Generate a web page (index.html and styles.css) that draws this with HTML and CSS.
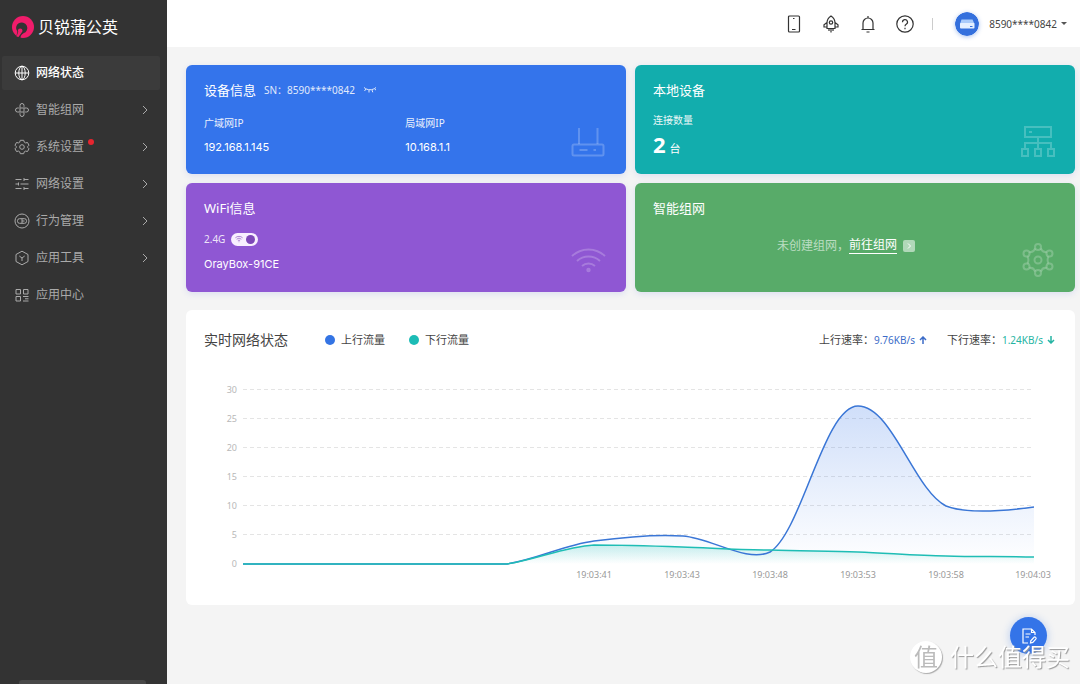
FILE: index.html
```html
<!DOCTYPE html>
<html lang="zh-CN">
<head>
<meta charset="utf-8">
<meta name="viewport" content="width=device-width, initial-scale=1">
<title>贝锐蒲公英</title>
<link rel="stylesheet" href="styles.css">
</head>
<body>
<div class="app">
  <aside class="sidebar">
    <div class="brand">
      <svg class="brand-logo" viewBox="0 0 22 22" aria-hidden="true"><circle cx="11" cy="11" r="11" fill="#f01c6b"/><path d="M5 22C4 18.500 5.500 17.500 5.300 15.500A5.600 5.600 0 1 1 11.500 17.300C9.500 18.500 8.500 20 8.500 22Z" fill="#333"/><circle cx="8.200" cy="14.800" r="2.300" fill="#f01c6b"/><path d="M4.500 20.500 6.300 15.800l3.200 1-3 4.200z" fill="#f01c6b"/></svg>
      <span class="brand-name">贝锐蒲公英</span>
    </div>
    <nav class="nav">
      <a class="nav-item active" href="#"><svg class="nav-icon" viewBox="0 0 16 16"><circle cx="8" cy="8" r="6.800"/><ellipse cx="8" cy="8" rx="3.200" ry="6.800"/><path d="M1.200 8h13.600M8 1.200v13.600"/></svg><span>网络状态</span></a>
      <a class="nav-item" href="#"><svg class="nav-icon" viewBox="0 0 16 16"><path d="M6 9.700V3.500a2 2 0 0 1 4 0V4.800M6.300 6h6.200a2 2 0 0 1 0 4H11.200M10 6.300v6.200a2 2 0 0 1-4 0V11.200M9.700 10H3.500a2 2 0 0 1 0-4H4.800"/></svg><span>智能组网</span><svg class="chevron" viewBox="0 0 6 10"><path d="M1 1l4 4-4 4"/></svg></a>
      <a class="nav-item" href="#"><svg class="nav-icon" viewBox="0 0 16 16"><path stroke-linejoin="round" d="M6.300 1.300h3.400l.6 1.900 1.200.7 2-.4 1.500 2.700L13.700 7.600v.8l1.300 1.400-1.500 2.700-2-.4-1.200.7-.6 1.900H6.300l-.6-1.900-1.200-.7-2 .4L1 9.800l1.300-1.400v-.8L1 6.200l1.500-2.700 2 .4 1.200-.7z"/><circle cx="8" cy="8" r="2.300"/></svg><span class="dotted">系统设置<i class="badge"></i></span><svg class="chevron" viewBox="0 0 6 10"><path d="M1 1l4 4-4 4"/></svg></a>
      <a class="nav-item" href="#"><svg class="nav-icon" viewBox="0 0 16 16"><path d="M1.500 3.500h6M10 3.500h4.500M10 2v3M1.500 8H4M6.500 8h8M4.500 6.500v3M1.500 12.500h6M10 12.500h4.500M10 11v3"/></svg><span>网络设置</span><svg class="chevron" viewBox="0 0 6 10"><path d="M1 1l4 4-4 4"/></svg></a>
      <a class="nav-item" href="#"><svg class="nav-icon" viewBox="0 0 16 16"><circle cx="8" cy="8" r="7"/><rect x="3.500" y="5.700" width="9" height="4.600" rx="2"/><path d="M8 5.700v4.600M8 8h2.500"/></svg><span>行为管理</span><svg class="chevron" viewBox="0 0 6 10"><path d="M1 1l4 4-4 4"/></svg></a>
      <a class="nav-item" href="#"><svg class="nav-icon" viewBox="0 0 16 16"><path d="M8 1.200l6 3.300v7l-6 3.300-6-3.300v-7zM5.300 6l2.700 2 2.700-2M8 8v3"/></svg><span>应用工具</span><svg class="chevron" viewBox="0 0 6 10"><path d="M1 1l4 4-4 4"/></svg></a>
      <a class="nav-item" href="#"><svg class="nav-icon" viewBox="0 0 16 16"><path d="M2 2.500h4.500V7H2zM9.500 2.500H14V7H9.500zM2 9.500h4.500V14H2zM9 9.500h5.500M11 11.800h3.500M9 14h5.500"/></svg><span>应用中心</span></a>
    </nav>
    <div class="sidebar-handle"></div>
  </aside>

  <div class="page">
    <header class="topbar">
      <button class="icon-btn" type="button" aria-label="手机"><svg viewBox="0 0 20 20"><rect x="4.500" y="2" width="11" height="16" rx="1"/><path d="M8 15.500h3.500M9 4.500h1.500"/></svg></button>
      <button class="icon-btn" type="button" aria-label="加速"><svg viewBox="0 0 20 20"><path d="M10 2C7 4 6 6.500 6 9v5.500h8V9c0-2.500-1-5-4-7zM6 8.500l-3 2.200V13h3M14 8.500l3 2.200V13h-3M8 14.500V17M10 14.500v4M12 14.500V17"/><circle cx="10" cy="8.500" r="1.700"/></svg></button>
      <button class="icon-btn" type="button" aria-label="通知"><svg viewBox="0 0 20 20"><path d="M3.500 15.500h13M5 15.500V9a5 5 0 0 1 10 0v6.500M10 2v2M8.500 18h3"/></svg></button>
      <button class="icon-btn" type="button" aria-label="帮助"><svg viewBox="0 0 20 20"><circle cx="10" cy="10" r="8.200"/><path d="M7.500 8.200a2.500 2.500 0 1 1 3.700 2.100c-.8.500-1.200.9-1.200 1.900M10 13.800v1.400"/></svg></button>
      <span class="divider"></span>
      <button class="account" type="button">
        <svg class="avatar" viewBox="0 0 24 24" aria-hidden="true"><circle cx="12" cy="12" r="12" fill="#3470dd"/><path d="M6.500 7.500h11l2 4.500H5z" fill="#a9cbfa"/><rect x="5" y="11" width="14.500" height="5.500" rx="1" fill="#e4f0ff"/><path d="M15 14.500h2.500" stroke="#3470dd"/></svg>
        <span>8590****0842</span>
        <i class="caret"></i>
      </button>
    </header>

    <main class="content">
      <section class="cards">
        <article class="card blue">
          <div class="card-body">
            <header class="card-head"><h2>设备信息</h2><span class="sn">SN：8590****0842</span>
              <svg class="eye" viewBox="0 0 14 8" aria-hidden="true"><path d="M1 1.500c3.500 3 8.500 3 12 0M3 3 1.500 5M6 4v2.500M9 4l.8 2.300M11.500 3l1.500 1"/></svg></header>
            <dl class="facts">
              <div><dt>广域网IP</dt><dd>192.168.1.145</dd></div>
              <div><dt>局域网IP</dt><dd>10.168.1.1</dd></div>
            </dl>
          </div>
          <svg class="card-icon" viewBox="0 0 36 36" aria-hidden="true"><rect x="2.500" y="19.500" width="31" height="11" rx="1.500"/><path d="M9 3v16M27.500 3v16M9.500 25h8M23.500 25h2.500"/></svg>
        </article>

        <article class="card teal">
          <div class="card-body">
            <header class="card-head"><h2>本地设备</h2></header>
            <p class="label">连接数量</p>
            <p class="count"><strong>2</strong><span>台</span></p>
          </div>
          <svg class="card-icon" viewBox="0 0 36 36" aria-hidden="true"><path d="M6 2h26v10H6zM10 7h3M19 12v12M6 24v-6h26v6M3 24h6v7H3zM16 24h6v7h-6zM29 24h6v7h-6z"/></svg>
        </article>

        <article class="card purple">
          <div class="card-body">
            <header class="card-head"><h2>WiFi信息</h2></header>
            <label class="band"><span>2.4G</span>
              <span class="switch"><input type="checkbox" checked><svg viewBox="0 0 12 10" aria-hidden="true"><path d="M1.500 3.500a6.500 6.500 0 0 1 9 0M3 5.300a4.300 4.300 0 0 1 6 0M4.600 7a2 2 0 0 1 2.800 0M6 8v1"/></svg></span>
            </label>
            <p class="value">OrayBox-91CE</p>
          </div>
          <svg class="card-icon" viewBox="0 0 36 36" aria-hidden="true"><path d="M2 13a24 24 0 0 1 33 0M7 18a17 17 0 0 1 23 0M12 23a10 10 0 0 1 13 0"/><circle cx="18.500" cy="27" r="1.200"/></svg>
        </article>

        <article class="card green">
          <div class="card-body">
            <header class="card-head"><h2>智能组网</h2></header>
            <p class="empty">未创建组网，<a href="#">前往组网</a><svg class="go" viewBox="0 0 12 12" aria-hidden="true"><rect width="12" height="12" rx="2"/><path d="M5 3.500 7.500 6 5 8.500"/></svg></p>
          </div>
          <svg class="card-icon" viewBox="0 0 36 36" aria-hidden="true"><circle cx="19" cy="17" r="3.500"/><circle cx="19" cy="4" r="3"/><circle cx="19" cy="30" r="3"/><circle cx="7.500" cy="10.500" r="3"/><circle cx="30.500" cy="10.500" r="3"/><circle cx="7.500" cy="23.500" r="3"/><circle cx="30.500" cy="23.500" r="3"/><path d="M16 5.500c-1 3-3 4-5.500 3.500M22 5.500c1 3 3 4 5.500 3.500M16 28.500c-1-3-3-4-5.500-3.500M22 28.500c1-3 3-4 5.500-3.500M8.500 13.500c1.300 2.500 1.300 4.500 0 7M29.500 13.500c-1.300 2.500-1.300 4.500 0 7"/></svg>
        </article>
      </section>

      <section class="panel">
        <header class="panel-head">
          <h2>实时网络状态</h2>
          <ul class="legend"><li class="up">上行流量</li><li class="down">下行流量</li></ul>
          <div class="rates">
            <span>上行速率：<b class="rate-up">9.76KB/s</b><svg class="arrow rate-up" viewBox="0 0 8 8"><path d="M4 8V1M1 4l3-3 3 3"/></svg></span>
            <span>下行速率：<b class="rate-down">1.24KB/s</b><svg class="arrow rate-down" viewBox="0 0 8 8"><path d="M4 0v7M1 4l3 3 3-3"/></svg></span>
          </div>
        </header>
        <svg class="chart" viewBox="0 0 851 206" role="img" aria-label="实时网络状态">
          <defs>
            <linearGradient id="fill-up" x1="0" y1="26" x2="0" y2="184" gradientUnits="userSpaceOnUse"><stop offset="0" stop-color="#3a78e8" stop-opacity=".24"/><stop offset="1" stop-color="#3a78e8" stop-opacity="0"/></linearGradient>
            <linearGradient id="fill-down" x1="0" y1="165" x2="0" y2="184" gradientUnits="userSpaceOnUse"><stop offset="0" stop-color="#1fc0b7" stop-opacity=".24"/><stop offset="1" stop-color="#1fc0b7" stop-opacity="0"/></linearGradient>
          </defs>
          <path class="grid" d="M39 9.500H830M39 38.500H830M39 67.500H830M39 96.500H830M39 125.500H830M39 154.500H830"/>
          <g class="axis axis-y"><text x="33" y="13">30</text><text x="33" y="42">25</text><text x="33" y="71">20</text><text x="33" y="100">15</text><text x="33" y="129">10</text><text x="33" y="158">5</text><text x="33" y="187">0</text></g>
          <g class="axis axis-x"><text x="390" y="198">19:03:41</text><text x="478" y="198">19:03:43</text><text x="566" y="198">19:03:48</text><text x="654" y="198">19:03:53</text><text x="742" y="198">19:03:58</text><text x="829" y="198">19:04:03</text></g>
          <path stroke="none" fill="url(#fill-up)" d="M39 184H303C334 179 360 165 390 161C420 157 452 154 479 156C507 158 543 183 566 172C598 152 620 26 654 26C688 26 710 110 742 126C762 134 800 131 830 127V184Z"/>
          <path stroke="none" fill="url(#fill-down)" d="M39 184H303C334 179 360 167 390 165C420 165 450 166 478 167C508 168 536 170 566 170C596 171 624 171 654 172C684 173 712 176 742 176C772 177 800 176 830 177V184Z"/>
          <path class="line line-up" d="M39 184H303C334 179 360 165 390 161C420 157 452 154 479 156C507 158 543 183 566 172C598 152 620 26 654 26C688 26 710 110 742 126C762 134 800 131 830 127"/>
          <path class="line line-down" d="M39 184H303C334 179 360 167 390 165C420 165 450 166 478 167C508 168 536 170 566 170C596 171 624 171 654 172C684 173 712 176 742 176C772 177 800 176 830 177"/>
        </svg>
      </section>
    </main>
  </div>
</div>

<button class="fab" type="button" aria-label="反馈"><svg viewBox="0 0 20 20"><path d="M9 17H4V3h8.500L16 6.500V9M12.500 3v3.500H16M6.500 8h5M6.500 11h3.500M11.500 17l.3-2.200 3-3.300a1.300 1.300 0 0 1 2 1.700l-3 3.200z"/></svg></button>
<div class="watermark"><span class="seal">值</span><span>什么值得买</span></div>
</body>
</html>
```
FILE: styles.css
```css
* { box-sizing: border-box; }
body { margin: 0; background: #f4f4f4; color: #444; font: 11px/16px "Noto Sans", "Noto Sans CJK SC", sans-serif; }
h2, p, ul, dl, dd { margin: 0; padding: 0; }
ul { list-style: none; }
button { border: 0; padding: 0; background: none; font: inherit; color: inherit; cursor: pointer; }
svg { display: block; flex: none; fill: none; stroke: currentColor; }

.app { display: flex; min-height: 100vh; }

/* Sidebar */
.sidebar { display: flex; flex-direction: column; flex: none; width: 167px; padding: 0 7px 0 2px; background: #333; }
.brand { display: flex; align-items: center; gap: 4px; height: 56px; padding: 0 0 2px 10px; color: #fff; }
.brand-logo { width: 22px; height: 22px; stroke: none; }
.brand-name { font-size: 16px; line-height: 24px; }
.nav { display: flex; flex-direction: column; gap: 3px; }
.nav-item { display: flex; align-items: center; gap: 6px; height: 34px; padding: 0 12px; border-radius: 2px; color: #aaa; font-size: 12px; text-decoration: none; }
.nav-item.active { background: #3b3b3b; color: #fff; font-weight: 500; }
.nav-icon { width: 16px; height: 16px; }
.chevron { width: 6px; height: 10px; margin-left: auto; }
.dotted { position: relative; }
.badge { position: absolute; top: 0; right: -10px; width: 6px; height: 6px; border-radius: 50%; background: #e6252f; }
.sidebar-handle { height: 4px; margin: auto 14px 0 17px; border-radius: 3px 3px 0 0; background: #484848; }

/* Top bar */
.page { display: flex; flex: 1; flex-direction: column; min-width: 0; }
.topbar { display: flex; align-items: center; justify-content: flex-end; gap: 17px; height: 47px; padding-right: 13px; background: #fff; }
.icon-btn svg { width: 20px; height: 20px; stroke: #333; stroke-width: 1.2; }
.divider { width: 1px; height: 12px; background: #ccc; }
.account { display: flex; align-items: center; margin-left: 5px; font-size: 10px; }
.avatar { width: 24px; height: 24px; margin-right: 10px; border-radius: 50%; stroke: none; box-shadow: 0 1px 4px #3470dd66; }
.caret { margin-left: 4px; border: 3px solid transparent; border-top-color: #555; border-bottom: 0; }

/* Cards */
.content { padding: 18px 5px 18px 19px; }
.cards { display: grid; grid-template-columns: repeat(2, minmax(0, 1fr)); gap: 9px; }
.card { display: flex; align-items: flex-end; min-height: 109px; padding: 15px 20px 13px 18px; border-radius: 6px; color: #fff; box-shadow: 0 2px 6px #5a6ae026; }
.blue { background: #3474eb; }
.teal { background: #12adad; }
.purple { background: #8f57d3; }
.green { background: #58ab69; }
.card-body { flex: 1; align-self: stretch; }
.card-head { display: flex; align-items: center; gap: 8px; height: 20px; }
.card h2 { font-size: 13px; font-weight: 400; line-height: 20px; }
.sn { font-size: 10px; opacity: .85; }
.eye { width: 14px; height: 8px; opacity: .85; }
.facts { display: grid; grid-template-columns: 55% 45%; margin-top: 15px; }
dt, .label, .band { font-size: 10px; line-height: 16px; opacity: .9; }
dd, .value { font: 11px/20px Inter, "Noto Sans", sans-serif; }
dd { margin-top: 6px; }
.label { margin-top: 12px; }
.count { display: flex; align-items: baseline; gap: 4px; height: 24px; margin-top: 4px; line-height: 24px; }
.count strong { font-size: 22px; }
.band { display: flex; align-items: center; gap: 6px; margin-top: 13px; opacity: 1; color: #ffffffdd; }
.value { margin-top: 7px; }
.switch { display: grid; align-items: center; }
.switch input, .switch svg { grid-area: 1 / 1; }
.switch input { display: flex; align-items: center; justify-content: flex-end; appearance: none; width: 27px; height: 13px; margin: 0; padding: 0 3px; border-radius: 7px; background: #f8efff; }
.switch input::after { content: ""; width: 9px; height: 9px; border-radius: 50%; background: #7e48b8; }
.switch input:not(:checked) { justify-content: flex-start; }
.switch svg { width: 10px; height: 8px; margin-left: 3px; color: #9a6bc8; pointer-events: none; }
.empty { display: flex; align-items: center; justify-content: center; margin: 19px 0 0 20px; color: #ffffff99; font-size: 12px; line-height: 16px; }
.empty a { color: #fff; text-decoration: none; border-bottom: 1px solid #fff; }
.go { width: 12px; height: 12px; margin-left: 6px; stroke: #fff; }
.go rect { fill: #ffffff88; stroke: none; }
.card-icon { width: 36px; height: 36px; color: #ffffff38; stroke-width: 2; }

/* Chart panel */
.panel { margin-top: 18px; padding: 18px 20px 19px 18px; border-radius: 6px; background: #fff; }
.panel-head { display: flex; align-items: center; height: 24px; }
.panel h2 { font-size: 14px; font-weight: 400; line-height: 24px; }
.legend { display: flex; gap: 24px; margin-left: 37px; }
.legend li { display: flex; align-items: center; gap: 6px; }
.legend li::before { content: ""; width: 10px; height: 10px; border-radius: 50%; background: #3474e4; }
.legend .down::before { background: #1cbcb6; }
.rates { display: flex; gap: 20px; margin-left: auto; }
.rates span { display: flex; align-items: center; }
.rates b { font-size: 10px; font-weight: 400; }
.rate-up { color: #3c6cc8; }
.rate-down { color: #25b4a3; }
.arrow { width: 8px; height: 8px; margin-left: 4px; stroke-width: 1.5; }
.chart { width: 100%; height: auto; margin-top: 28px; }
.grid { stroke: #e4e4e4; stroke-dasharray: 4 3; }
.axis { fill: #b8b8b8; stroke: none; font-size: 9px; }
.axis-y { text-anchor: end; }
.axis-x { fill: #999; text-anchor: middle; }
.line { stroke-width: 1.5; }
.line-up { stroke: #3a76d6; }
.line-down { stroke: #1fbdb5; }

/* Floating layer */
.fab { position: fixed; right: 33px; bottom: 30px; display: grid; place-items: center; width: 37px; height: 37px; border-radius: 50%; background: #3474e8; color: #fff; box-shadow: 0 1px 8px #3474e855; }
.fab svg { width: 20px; height: 20px; stroke-width: 1.2; }
.watermark { position: fixed; right: 10px; bottom: 11px; display: flex; align-items: center; gap: 8px; color: #fff; font-size: 24px; line-height: 32px; text-shadow: 1px 1px 1px #999; pointer-events: none; }
.seal { display: grid; place-items: center; width: 32px; height: 32px; border-radius: 50%; background: #fff; color: #bbb; box-shadow: 1px 1px 1px #aaa; text-shadow: none; }
```
